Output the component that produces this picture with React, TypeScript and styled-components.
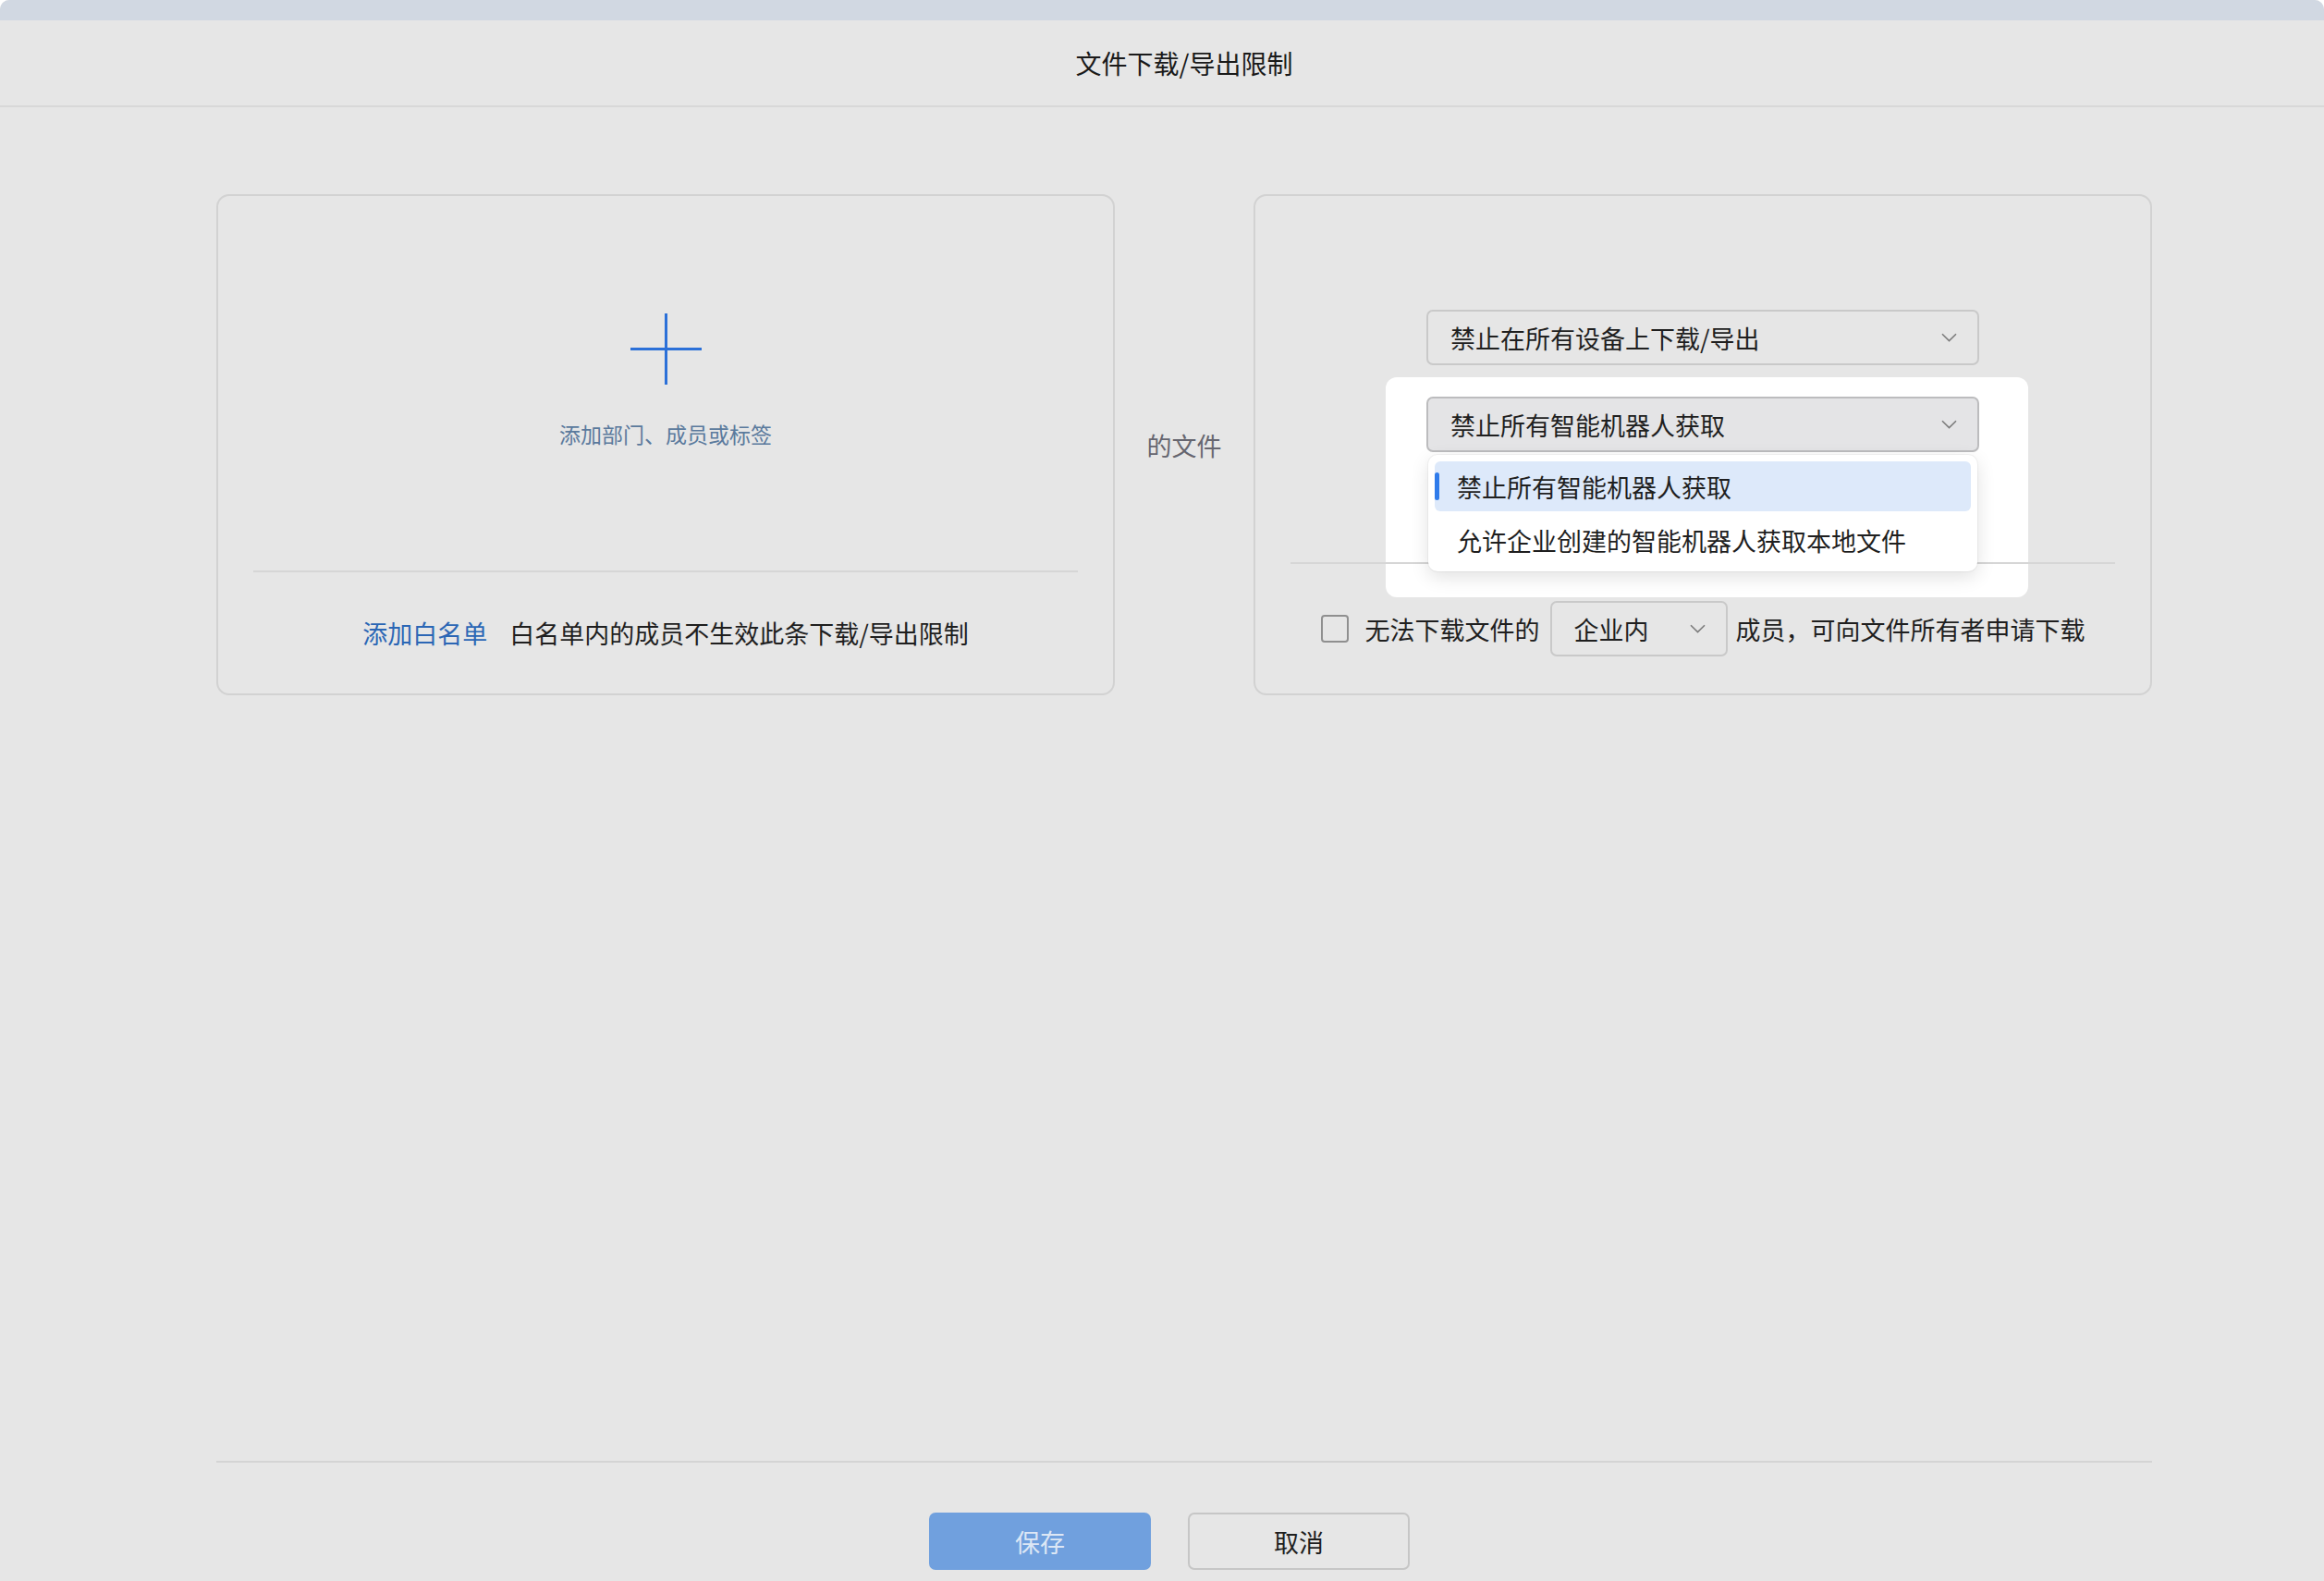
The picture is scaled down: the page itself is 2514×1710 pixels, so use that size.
import React from "react";
import styled, { createGlobalStyle } from "styled-components";

const GlobalStyle = createGlobalStyle`
  html, body { margin: 0; padding: 0; background: #ffffff; }
  body { font-family: "Noto Sans CJK SC", "Noto Sans", sans-serif; }
  * { box-sizing: border-box; }
`;

const Window = styled.div`
  width: 2514px;
  height: 1710px;
  display: flex;
  flex-direction: column;
  background: #e6e6e6;
  border-radius: 10px 10px 0 0;
  overflow: hidden;
  color: #1f1f1f;
`;

const TopStrip = styled.div`
  height: 22px;
  flex-shrink: 0;
  background: #d1d8e2;
`;

const Header = styled.header`
  height: 94px;
  flex-shrink: 0;
  border-bottom: 2px solid #d8d8d8;
  display: flex;
  align-items: center;
  justify-content: center;
  padding-left: 48px;
  font-size: 28px;
  color: #1a1a1a;
`;

const Main = styled.main`
  flex: 1;
  padding: 94px 186px 0 234px;
`;

const CardsRow = styled.div`
  display: grid;
  grid-template-columns: 972px 1fr 972px;
  align-items: center;
`;

const Card = styled.section`
  height: 542px;
  border: 2px solid #d2d2d2;
  border-radius: 14px;
  display: flex;
  flex-direction: column;
  position: relative;
  isolation: isolate;
`;

const AddArea = styled.div`
  flex: 1;
  display: flex;
  flex-direction: column;
  align-items: center;
  padding-top: 127px;
`;

const AddLabel = styled.div`
  margin-top: 37px;
  font-size: 23px;
  line-height: 33px;
  color: #5b7a9d;
`;

const Divider = styled.div`
  height: 2px;
  flex-shrink: 0;
  margin: 0 38px;
  background: #d6d6d6;
`;

const BottomRow = styled.div<{ $h: number }>`
  height: ${(p) => p.$h}px;
  flex-shrink: 0;
  display: flex;
  align-items: center;
  justify-content: center;
  font-size: 27px;
  color: #1f1f1f;
  white-space: nowrap;
`;

const LinkText = styled.span`
  color: #2b66b5;
  margin-right: 24px;
`;

const MiddleLabel = styled.div`
  justify-self: center;
  font-size: 27px;
  color: #666670;
`;

const SelectArea = styled.div`
  flex: 1;
  display: flex;
  flex-direction: column;
  align-items: center;
  gap: 34px;
  padding-top: 123px;
`;

const SelectBox = styled.div<{ $active?: boolean; $w: number }>`
  width: ${(p) => p.$w}px;
  height: 60px;
  flex-shrink: 0;
  display: flex;
  align-items: center;
  justify-content: space-between;
  padding: 0 22px 0 24px;
  border: 2px solid ${(p) => (p.$active ? "#bcbcbe" : "#c9c9c9")};
  border-radius: 7px;
  background: ${(p) => (p.$active ? "#e4e4e6" : "transparent")};
  font-size: 27px;
  color: #1f1f1f;
  white-space: nowrap;
`;

const Anchor = styled.div`
  position: relative;
  width: 598px;
`;

const Spotlight = styled.div`
  position: absolute;
  top: -21px;
  left: -44px;
  width: 695px;
  height: 238px;
  background: #ffffff;
  border-radius: 12px;
  z-index: -1;
`;

const Menu = styled.div`
  position: absolute;
  top: calc(100% + 3px);
  left: 2px;
  right: 2px;
  z-index: 1;
  padding: 7px;
  display: flex;
  flex-direction: column;
  gap: 4px;
  background: #ffffff;
  border-radius: 10px;
  box-shadow: 0 6px 20px rgba(0, 0, 0, 0.12), 0 0 0 1px rgba(0, 0, 0, 0.04);
`;

const MenuItem = styled.div<{ $selected?: boolean }>`
  position: relative;
  height: 54px;
  display: flex;
  align-items: center;
  padding-left: 24px;
  border-radius: 6px;
  font-size: 27px;
  color: #1f1f1f;
  white-space: nowrap;
  background: ${(p) => (p.$selected ? "#dde9fa" : "transparent")};
  &::before {
    content: "";
    display: ${(p) => (p.$selected ? "block" : "none")};
    position: absolute;
    left: 0;
    top: 12px;
    bottom: 12px;
    width: 5px;
    border-radius: 3px;
    background: #2f7bea;
  }
`;

const Checkbox = styled.span`
  width: 30px;
  height: 30px;
  flex-shrink: 0;
  border: 2px solid #8f8f8f;
  border-radius: 4px;
  margin-right: 18px;
`;

const InlineSelect = styled(SelectBox)`
  margin: 0 9px 0 11px;
`;

const Footer = styled.footer`
  flex-shrink: 0;
  margin: 0 186px 0 234px;
  border-top: 2px solid #d4d4d4;
  padding: 54px 32px 12px 0;
  display: flex;
  justify-content: center;
  gap: 40px;
`;

const Button = styled.button<{ $primary?: boolean }>`
  width: 240px;
  height: 62px;
  border-radius: 7px;
  font-family: inherit;
  font-size: 27px;
  cursor: pointer;
  border: 2px solid ${(p) => (p.$primary ? "#70a0de" : "#c6c6c6")};
  background: ${(p) => (p.$primary ? "#70a0de" : "transparent")};
  color: ${(p) => (p.$primary ? "#dde7f5" : "#1f1f1f")};
`;

const Chevron = () => (
  <svg width="17" height="10" viewBox="0 0 17 10" fill="none">
    <polyline points="1,1.2 8.5,8.6 16,1.2" stroke="#7c7c7c" strokeWidth="1.6" />
  </svg>
);

const PlusIcon = () => (
  <svg width="77" height="77" viewBox="0 0 77 77" fill="none">
    <line x1="38.5" y1="0" x2="38.5" y2="77" stroke="#2b70d8" strokeWidth="3" />
    <line x1="0" y1="38.5" x2="77" y2="38.5" stroke="#2b70d8" strokeWidth="3" />
  </svg>
);

export default function App() {
  return (
    <>
      <GlobalStyle />
      <Window>
        <TopStrip />
        <Header>文件下载/导出限制</Header>
        <Main>
          <CardsRow>
            <Card>
              <AddArea>
                <PlusIcon />
                <AddLabel>添加部门、成员或标签</AddLabel>
              </AddArea>
              <Divider />
              <BottomRow $h={131}>
                <LinkText>添加白名单</LinkText>
                <span>白名单内的成员不生效此条下载/导出限制</span>
              </BottomRow>
            </Card>
            <MiddleLabel>的文件</MiddleLabel>
            <Card>
              <SelectArea>
                <SelectBox $w={598}>
                  <span>禁止在所有设备上下载/导出</span>
                  <Chevron />
                </SelectBox>
                <Anchor>
                  <Spotlight />
                  <SelectBox $w={598} $active>
                    <span>禁止所有智能机器人获取</span>
                    <Chevron />
                  </SelectBox>
                  <Menu>
                    <MenuItem $selected>禁止所有智能机器人获取</MenuItem>
                    <MenuItem>允许企业创建的智能机器人获取本地文件</MenuItem>
                  </Menu>
                </Anchor>
              </SelectArea>
              <Divider />
              <BottomRow $h={140}>
                <Checkbox />
                <span>无法下载文件的</span>
                <InlineSelect $w={192}>
                  <span>企业内</span>
                  <Chevron />
                </InlineSelect>
                <span>成员，可向文件所有者申请下载</span>
              </BottomRow>
            </Card>
          </CardsRow>
        </Main>
        <Footer>
          <Button $primary>保存</Button>
          <Button>取消</Button>
        </Footer>
      </Window>
    </>
  );
}
